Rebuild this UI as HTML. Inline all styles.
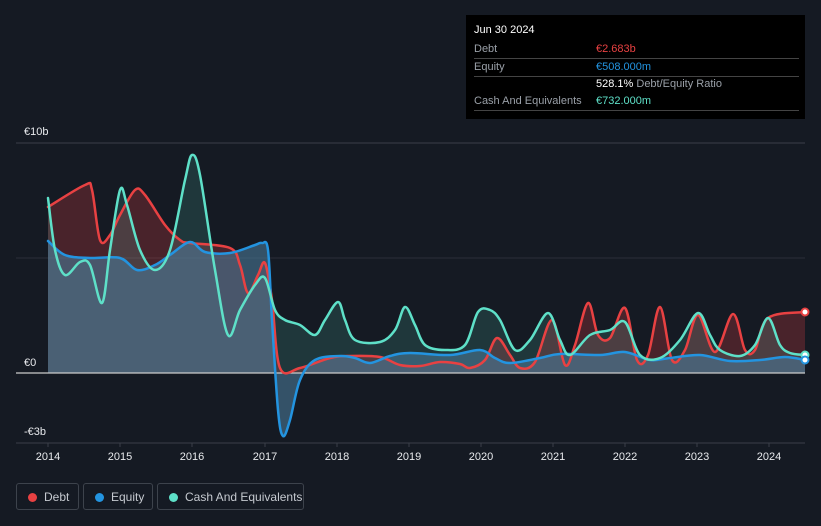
<!DOCTYPE html>
<html><head><meta charset="utf-8"><style>
body{margin:0;width:821px;height:526px;background:#151a23;font-family:"Liberation Sans",sans-serif;overflow:hidden;position:relative}
.tt{position:absolute;left:466px;top:15px;width:339px;height:104px;background:#000;color:#fff;font-size:11px}
.tt .r{position:absolute;left:8px;right:6px;height:17px;border-bottom:1px solid #444;line-height:17px}
.tt .l{color:#9aa0a8;position:absolute;left:0}
.tt .v{position:absolute;left:122px}
.lg{position:absolute;top:483px;height:27px;border:1px solid #3d434c;border-radius:3px;color:#c5c9cf;font-size:12px;line-height:26px;box-sizing:border-box}
.lg i{position:absolute;left:11px;top:9px;width:9px;height:9px;border-radius:50%}
.lg span{position:absolute;left:27px}
</style></head><body>
<svg width="821" height="526" style="position:absolute;left:0;top:0">
<line x1="16" y1="143" x2="805" y2="143" stroke="#3a3f48"/>
<line x1="16" y1="258" x2="805" y2="258" stroke="#2a2f38"/>
<line x1="16" y1="443" x2="805" y2="443" stroke="#3a3f48"/>
<g stroke="#3a3f48"><line x1="48" y1="443" x2="48" y2="447"/><line x1="120" y1="443" x2="120" y2="447"/><line x1="192" y1="443" x2="192" y2="447"/><line x1="265" y1="443" x2="265" y2="447"/><line x1="337" y1="443" x2="337" y2="447"/><line x1="409" y1="443" x2="409" y2="447"/><line x1="481" y1="443" x2="481" y2="447"/><line x1="553" y1="443" x2="553" y2="447"/><line x1="625" y1="443" x2="625" y2="447"/><line x1="697" y1="443" x2="697" y2="447"/><line x1="769" y1="443" x2="769" y2="447"/></g>
<path id="fd" fill="#e84142" fill-opacity="0.25"/>
<path id="fc" fill="#5ee0c8" fill-opacity="0.15"/>
<path id="fe" fill="#4a7896" fill-opacity="0.6"/>
<line x1="16" y1="373" x2="805" y2="373" stroke="#ccc" stroke-width="1.2"/>
<g fill="none" stroke-width="2.5" stroke-linejoin="round" stroke-linecap="round">
<path id="ld" stroke="#e84142"/>
<path id="le" stroke="#2394e0"/>
<path id="lc" stroke="#5ee0c8"/>
</g>
<circle cx="805" cy="312" r="3.5" fill="#fff" stroke="#e84142" stroke-width="2"/>
<circle cx="805" cy="355" r="3.5" fill="#fff" stroke="#5ee0c8" stroke-width="2"/>
<circle cx="805" cy="360" r="3.5" fill="#fff" stroke="#2394e0" stroke-width="2"/>
<g fill="#e8eaed" font-size="11" font-family="Liberation Sans,sans-serif">
<text x="24" y="135">€10b</text><text x="24" y="366">€0</text><text x="24" y="435">-€3b</text>
<g text-anchor="middle"><text x="48" y="460">2014</text><text x="120" y="460">2015</text><text x="192" y="460">2016</text><text x="265" y="460">2017</text><text x="337" y="460">2018</text><text x="409" y="460">2019</text><text x="481" y="460">2020</text><text x="553" y="460">2021</text><text x="625" y="460">2022</text><text x="697" y="460">2023</text><text x="769" y="460">2024</text></g>
</g>
</svg>
<div class="tt">
<div style="position:absolute;left:8px;top:9px">Jun 30 2024</div>
<div class="r" style="top:26px"><span class="l">Debt</span><span class="v" style="color:#e84142">€2.683b</span></div>
<div class="r" style="top:44px"><span class="l">Equity</span><span class="v" style="color:#2394e0">€508.000m</span></div>
<div class="r" style="top:61px;border:none"><span class="v"><b style="font-weight:normal;color:#fff">528.1%</b> <span style="color:#9aa0a8">Debt/Equity Ratio</span></span></div>
<div class="r" style="top:78px"><span class="l">Cash And Equivalents</span><span class="v" style="color:#5ee0c8">€732.000m</span></div>
</div>
<div class="lg" style="left:16px;width:63px"><i style="background:#e84142"></i><span>Debt</span></div>
<div class="lg" style="left:83px;width:70px"><i style="background:#2394e0"></i><span>Equity</span></div>
<div class="lg" style="left:157px;width:147px"><i style="background:#5ee0c8"></i><span>Cash And Equivalents</span></div>
<script>
function P(s){return s.trim().split(/\s+/).map(function(p){return p.split(',').map(Number)})}
function smooth(a){var d='M'+a[0][0]+','+a[0][1];for(var i=0;i<a.length-1;i++){var p0=a[i-1]||a[i],p1=a[i],p2=a[i+1],p3=a[i+2]||p2;var t=6;var c1x=p1[0]+(p2[0]-p0[0])/t,c1y=p1[1]+(p2[1]-p0[1])/t,c2x=p2[0]-(p3[0]-p1[0])/t,c2y=p2[1]-(p3[1]-p1[1])/t;c1x=Math.min(Math.max(c1x,p1[0]),p2[0]);c2x=Math.min(Math.max(c2x,p1[0]),p2[0]);d+=' C'+c1x.toFixed(1)+','+c1y.toFixed(1)+' '+c2x.toFixed(1)+','+c2y.toFixed(1)+' '+p2[0]+','+p2[1]}return d}
var D=P("48,207 85,185 92,190 100,240 110,235 120,215 135,190 145,195 165,225 180,240 190,243 230,248 240,265 248,293 258,275 265,263 272,300 280,368 300,368 330,358 350,356 380,357 400,365 420,366 440,362 460,364 470,368 485,360 497,338 510,355 520,368 535,362 552,320 565,365 575,345 588,303 598,335 610,338 625,308 637,360 648,355 660,307 672,360 685,350 698,315 715,352 733,314 745,350 755,350 768,318 805,312");
var E=P("48,241 65,255 90,258 120,258 137,270 155,265 170,255 190,242 205,252 230,253 255,245 262,243 268,250 272,320 278,410 283,436 290,420 300,380 315,360 340,356 355,358 370,363 390,356 410,353 450,355 480,350 495,358 510,363 540,358 560,354 600,355 625,352 650,360 670,358 700,355 730,361 760,360 785,357 805,360");
var C=P("48,198 55,250 65,275 80,262 90,265 102,303 110,250 120,190 127,205 140,250 155,270 170,250 185,180 192,155 200,175 215,270 228,335 240,310 255,285 265,278 275,310 285,320 300,325 315,335 325,320 338,302 345,320 355,340 380,342 395,330 405,307 415,325 425,345 445,350 465,345 478,312 490,310 500,320 515,350 530,340 548,313 560,340 570,355 590,335 610,330 625,322 640,355 660,358 680,340 698,313 710,335 720,350 740,356 755,345 768,318 780,345 790,353 805,355");
[[D,'ld','fd'],[E,'le','fe'],[C,'lc','fc']].forEach(function(x){var s=smooth(x[0]);document.getElementById(x[1]).setAttribute('d',s);document.getElementById(x[2]).setAttribute('d',s+' L805,373 L48,373 Z')});
</script>
</body></html>
